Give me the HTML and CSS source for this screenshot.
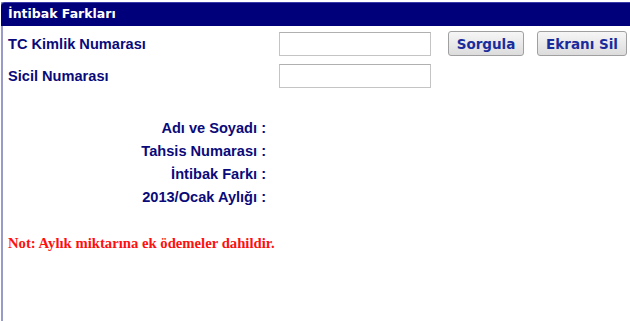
FILE: index.html
```html
<!DOCTYPE html>
<html lang="tr">
<head>
<meta charset="utf-8">
<title>İntibak Farkları</title>
<link rel="stylesheet" href="styles.css">
</head>
<body>
<div class="panel">
  <div class="panel-head">İntibak Farkları</div>
  <div class="panel-body">
    <div class="form-row">
      <label class="label">TC Kimlik Numarası</label>
      <input class="field" type="text">
      <button class="btn btn-first" type="button">Sorgula</button>
      <button class="btn" type="button">Ekranı Sil</button>
    </div>
    <div class="form-row">
      <label class="label">Sicil Numarası</label>
      <input class="field" type="text">
    </div>
    <div class="info">
      <div class="info-row">Adı ve Soyadı :</div>
      <div class="info-row">Tahsis Numarası :</div>
      <div class="info-row">İntibak Farkı :</div>
      <div class="info-row">2013/Ocak Aylığı :</div>
    </div>
    <p class="note">Not: Aylık miktarına ek ödemeler dahildir.</p>
  </div>
</div>
</body>
</html>
```
FILE: styles.css
```css
html, body {
  margin: 0;
  padding: 0;
  background: #ffffff;
}
body {
  width: 630px;
  height: 321px;
  overflow: hidden;
}
.panel {
  margin-top: 2px;
  margin-left: 1px;
  border-left: 2px solid #9a9ac8;
  height: 319px;
  box-sizing: border-box;
}
.panel-head {
  margin-left: -2px;
  background: #00007a;
  border-top: 1px solid #3a3aa8;
  border-top-left-radius: 4px;
  height: 24px;
  box-sizing: border-box;
  padding-left: 7px;
  font-family: "DejaVu Sans", Verdana, sans-serif;
  font-weight: bold;
  font-size: 12.5px;
  line-height: 21px;
  color: #ffffff;
}
.panel-body {
  padding-top: 5px;
}
.form-row {
  display: flex;
  align-items: center;
  height: 25px;
  margin-bottom: 7px;
}
.label {
  width: 271px;
  padding-left: 5px;
  font-family: "Liberation Sans", Arial, sans-serif;
  font-weight: bold;
  font-size: 14.6px;
  color: #0a0a7a;
}
.field {
  width: 152px;
  height: 24px;
  box-sizing: border-box;
  border: 1px solid #c4c4c4;
  border-top-color: #b0b0b0;
  margin: 0;
  padding: 0 3px;
  background: #fff;
}
.btn {
  height: 25px;
  box-sizing: border-box;
  border: 1px solid #a0a0a0;
  border-radius: 3px;
  background: linear-gradient(#f6f6f6, #dcdcdc);
  font-family: "DejaVu Sans", Verdana, sans-serif;
  font-weight: bold;
  font-size: 13.5px;
  color: #1a2c9c;
  padding: 0 4px;
  margin-left: 13px;
}
.btn-first {
  margin-left: 17px;
  width: 76px;
}
.btn + .btn {
  width: 90px;
}
.info {
  width: 263px;
  text-align: right;
  margin-top: 29px;
  font-family: "Liberation Sans", Arial, sans-serif;
  font-weight: bold;
  font-size: 14.6px;
  color: #0a0a7a;
}
.info-row {
  height: 23px;
  line-height: 23px;
}
.note {
  margin: 26px 0 0 5px;
  font-family: "Liberation Serif", "Times New Roman", serif;
  font-weight: bold;
  font-size: 14.7px;
  color: #ff1010;
}
```
